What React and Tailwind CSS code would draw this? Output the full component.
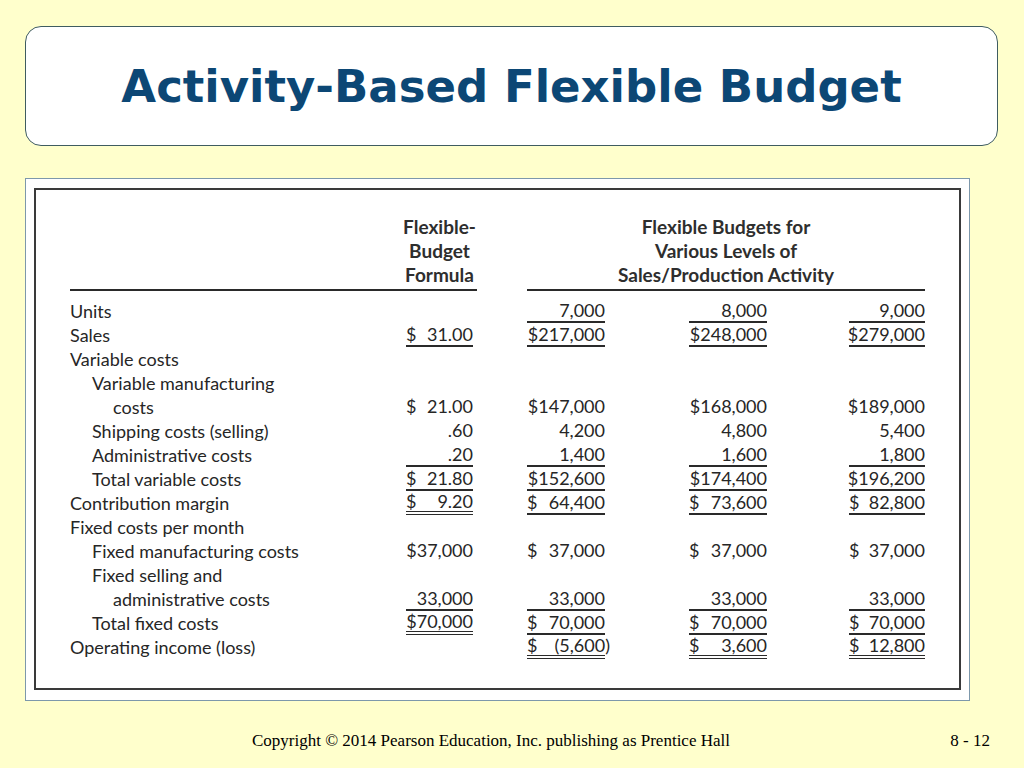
const rows = [
  { label: 'Units', level: 0, formula: null, values: ['7,000', '8,000', '9,000'], vLine: 'single' },
  { label: 'Sales', level: 0, formula: '$ 31.00', fLine: 'single', values: ['$217,000', '$248,000', '$279,000'], vLine: 'single' },
  { label: 'Variable costs', level: 0 },
  { label: 'Variable manufacturing', level: 1 },
  { label: 'costs', level: 2, formula: '$ 21.00', values: ['$147,000', '$168,000', '$189,000'] },
  { label: 'Shipping costs (selling)', level: 1, formula: '.60', values: ['4,200', '4,800', '5,400'] },
  { label: 'Administrative costs', level: 1, formula: '.20', fLine: 'single', values: ['1,400', '1,600', '1,800'], vLine: 'single' },
  { label: 'Total variable costs', level: 1, formula: '$ 21.80', fLine: 'single', values: ['$152,600', '$174,400', '$196,200'], vLine: 'single' },
  { label: 'Contribution margin', level: 0, formula: '$ 9.20', fLine: 'double', values: ['$ 64,400', '$ 73,600', '$ 82,800'], vLine: 'single' },
  { label: 'Fixed costs per month', level: 0 },
  { label: 'Fixed manufacturing costs', level: 1, formula: '$37,000', values: ['$ 37,000', '$ 37,000', '$ 37,000'] },
  { label: 'Fixed selling and', level: 1 },
  { label: 'administrative costs', level: 2, formula: '33,000', fLine: 'single', values: ['33,000', '33,000', '33,000'], vLine: 'single' },
  { label: 'Total fixed costs', level: 1, formula: '$70,000', fLine: 'double', values: ['$ 70,000', '$ 70,000', '$ 70,000'], vLine: 'single' },
  { label: 'Operating income (loss)', level: 0, formula: null, values: ['$ (5,600)', '$ 3,600', '$ 12,800'], vLine: 'double' },
];

const indent = ['pl-0', 'pl-[22px]', 'pl-[43px]'];

// one accounting figure: "$" pinned left, number pinned right
const Amount = ({ text, line, width }) => {
  const lineCls =
    line === 'double'
      ? 'border-b-[4px] border-double border-[#2a2a2a]'
      : line === 'single'
        ? 'border-b-[2px] border-[#2a2a2a]'
        : 'border-b-[2px] border-transparent';
  const split = text.startsWith('$ ');
  const num = split ? text.slice(2) : text;
  const paren = num.endsWith(')');
  return (
    <span className={`${width} h-[24px] flex items-center ${split ? 'justify-between' : 'justify-end'} ${lineCls}`}>
      {split && <span>$</span>}
      <span className={paren ? '-mr-[5px]' : ''}>{num}</span>
    </span>
  );
};

export default function App() {
  return (
    <div className="w-[1024px] h-[768px] bg-[#ffffcc] overflow-hidden flex flex-col">
      {/* TITLE */}
      <div className="ml-[25px] mt-[26px] w-[973px] h-[120px] bg-white border border-[#3f5c60] rounded-[16px] flex items-center justify-center">
        <h1
          className="text-[45px] font-bold text-[#0c4775] tracking-[0px] pt-[2px]"
          style={{ fontFamily: '"DejaVu Sans", sans-serif' }}
        >
          Activity-Based Flexible Budget
        </h1>
      </div>

      {/* TABLE IMAGE */}
      <div className="ml-[25px] mt-[32px] w-[945px] h-[523px] bg-white border border-[#7d98ab] pl-[8px] pt-[9px]">
        <div
          className="w-[927px] h-[502px] border-2 border-[#3a3a3a] pl-[34px] pt-[25px] text-[18px] leading-[24px] text-[#262626]"
          style={{ fontFamily: 'Lato, sans-serif' }}
        >
          {/* HEADER */}
          <div className="grid grid-cols-[336px_67px_452px] font-bold text-[19px] text-[#2e2e2e]">
            <div />
            <div className="flex flex-col items-center whitespace-nowrap">
              <span>Flexible-</span>
              <span>Budget</span>
              <span>Formula</span>
            </div>
            <div className="pl-[54px] flex flex-col items-center whitespace-nowrap">
              <span>Flexible Budgets for</span>
              <span>Various Levels of</span>
              <span>Sales/Production Activity</span>
            </div>
          </div>
          <div className="flex mt-[2px] mb-[8px]">
            <div className="w-[407px] h-[2px] bg-[#2a2a2a]" />
            <div className="ml-[50px] w-[398px] h-[2px] bg-[#2a2a2a]" />
          </div>

          {/* ROWS */}
          {rows.map((r, i) => (
            <div key={i} className="grid grid-cols-[336px_67px_132px_162px_158px] h-[24px]">
              <div className={`${indent[r.level]} whitespace-nowrap`}>{r.label}</div>
              <div className="flex justify-end">
                {r.formula && <Amount text={r.formula} line={r.fLine} width="w-[67px]" />}
              </div>
              {[0, 1, 2].map((c) => (
                <div key={c} className="flex justify-end">
                  {r.values && <Amount text={r.values[c]} line={r.vLine} width={c === 2 ? 'w-[76px]' : 'w-[78px]'} />}
                </div>
              ))}
            </div>
          ))}
        </div>
      </div>

      {/* FOOTER */}
      <div
        className="mt-[29px] pl-[252px] pr-[34px] flex justify-between text-[17px] leading-[22px] text-black"
        style={{ fontFamily: '"Liberation Serif", serif' }}
      >
        <span>Copyright © 2014 Pearson Education, Inc. publishing as Prentice Hall</span>
        <span>8 - 12</span>
      </div>
    </div>
  );
}
